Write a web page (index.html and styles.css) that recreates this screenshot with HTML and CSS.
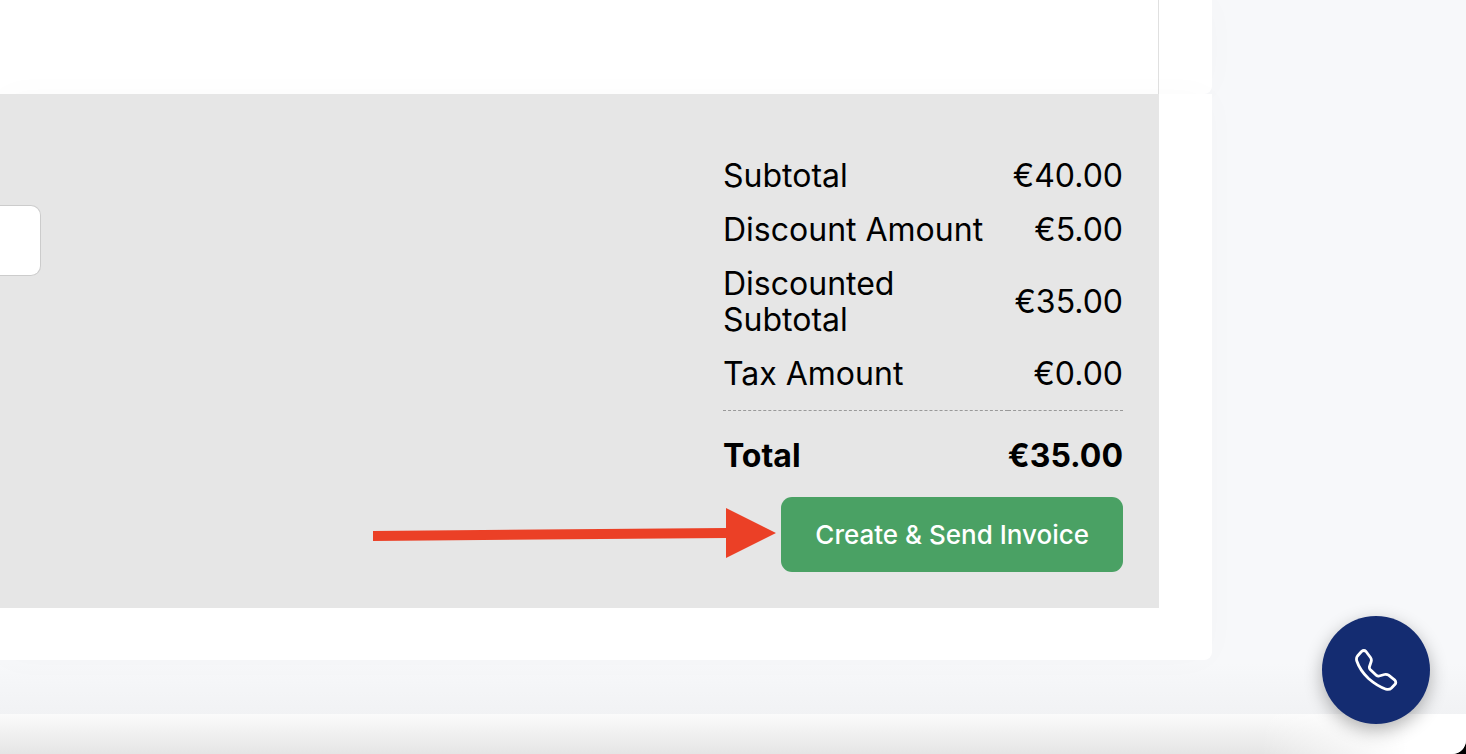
FILE: index.html
```
<!DOCTYPE html>
<html lang="en">
<head>
  <meta charset="UTF-8">
  <meta name="viewport" content="width=device-width, initial-scale=1.0">
  <title>Create Invoice</title>
  <link rel="stylesheet" href="styles.css">
</head>
<body>

  <main class="page">
    <section class="card items-card">
      <div class="items"></div>
    </section>

    <section class="card summary-card">
      <form class="summary">
        <input type="text" class="note" aria-label="Note">

        <div class="totals">
          <table>
            <tbody>
              <tr><th scope="row">Subtotal</th><td>€40.00</td></tr>
              <tr><th scope="row">Discount Amount</th><td>€5.00</td></tr>
              <tr><th scope="row">Discounted Subtotal</th><td>€35.00</td></tr>
              <tr><th scope="row">Tax Amount</th><td>€0.00</td></tr>
            </tbody>
            <tfoot>
              <tr><th scope="row">Total</th><td>€35.00</td></tr>
            </tfoot>
          </table>
          <div class="actions">
            <button type="button" class="send">Create &amp; Send Invoice</button>
            <svg class="arrow" width="403" height="52" viewBox="0 0 403 52" aria-hidden="true">
              <path d="M0 24 L353 21 V1 L403 26 L353 51 V31 L0 34 Z" fill="#eb4026"/>
            </svg>
          </div>
        </div>
      </form>
    </section>
  </main>

  <footer class="bottom-bar"></footer>

  <button type="button" class="call" aria-label="Call">
    <svg width="44" height="44" viewBox="0 0 44 44" aria-hidden="true">
      <path d="M3.500 8 L7.500 3.500 Q10 1.500 12 3.500 L16.500 9.500 Q17.800 11.300 17.200 13.500 L15.500 18.500 Q15 20.200 16.200 21.400 L22.500 27.400 Q23.700 28.400 25.200 28 L30.500 26.500 Q32.800 26 34.600 27.200 L40.500 31.800 Q42.500 33.700 41.300 36 L37.500 40 Q35.500 42 32 41.200 Q23 38 14.500 30.500 Q6 22.500 2.800 13 Q1.900 10.200 3.500 8 Z" fill="none" stroke="#fff" stroke-width="2.800" stroke-linejoin="round"/>
    </svg>
  </button>

</body>
</html>
```
FILE: styles.css
```
* {
  box-sizing: border-box;
}
body {
  margin: 0;
  min-height: 100vh;
  display: flex;
  flex-direction: column;
  overflow: hidden;
  font-family: Inter, "Liberation Sans", sans-serif;
  color: #000;
  background: linear-gradient(to bottom, #f7f8fa 88%, #f1f2f4 95%);
}
.page {
  flex: 1;
  padding-right: 254px;
}
.card {
  background: #fff;
  padding-right: 53px;
  box-shadow: 0 0 36px rgba(60, 70, 90, 0.02);
}
.items-card {
  border-radius: 0 0 8px 0;
}
.items {
  height: 94px;
  border-right: 1px solid #e0e0e0;
}
.summary-card {
  padding-bottom: 52px;
  border-radius: 0 0 8px 0;
}
.summary {
  display: flex;
  justify-content: space-between;
  align-items: flex-start;
  padding: 64px 36px 36px 0;
  background: #e6e6e6;
}
.note {
  width: 41px;
  height: 71px;
  margin-top: 47px;
  border: 1px solid #ccc;
  border-left: none;
  border-radius: 0 10px 10px 0;
  background: #fff;
}
.totals {
  width: 400px;
}
table {
  width: 100%;
  border-collapse: collapse;
  font-size: 32px;
  line-height: 36px;
}
th {
  padding: 0 12px 18px 0;
  font-weight: 400;
  text-align: left;
}
td {
  padding: 0 0 18px;
  text-align: right;
}
tfoot tr {
  border-top: 1px dashed #999;
}
tfoot th, tfoot td {
  padding-top: 27px;
  padding-bottom: 23px;
  font-weight: 700;
}
.actions {
  position: relative;
  display: flex;
  justify-content: flex-end;
}
.send {
  height: 75px;
  padding: 0 34px;
  border: none;
  border-radius: 11px;
  background: #4aa164;
  color: #fff;
  font-family: inherit;
  font-size: 26px;
  font-weight: 500;
  white-space: nowrap;
  cursor: pointer;
}
.send:hover {
  background: #3f8f57;
}
/* pointer to the send button */
.arrow {
  position: absolute;
  right: 347px;
  top: 10px;
}
.bottom-bar {
  height: 40px;
  background: linear-gradient(to right, rgba(255, 255, 255, 0) 86%, #fff 96%), linear-gradient(#fbfbfb, #e5e5e5);
  border-bottom-right-radius: 14px;
  box-shadow: 0 14px 0 #000;
}
.call {
  position: fixed;
  right: 36px;
  bottom: 30px;
  width: 108px;
  height: 108px;
  display: flex;
  align-items: center;
  justify-content: center;
  padding: 0;
  border: none;
  border-radius: 50%;
  background: #142c71;
  box-shadow: 0 6px 18px rgba(0, 0, 0, 0.3);
  cursor: pointer;
}
```
